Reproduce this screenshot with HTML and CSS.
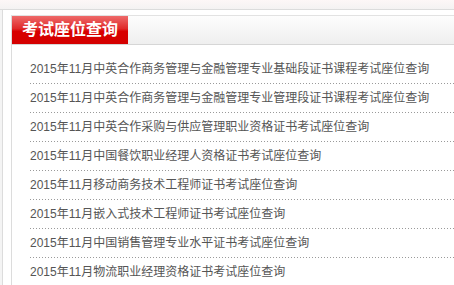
FILE: index.html
```html
<!DOCTYPE html>
<html lang="zh-CN">
<head>
    <meta charset="UTF-8">
    <title>考试座位查询</title>
    <link rel="stylesheet" href="styles.css">
</head>
<body>
    <div class="topbar"></div>
    <div class="wrap">
        <div class="side"></div>
        <div class="main">
            <div class="panel">
                <div class="panel-head">
                    <h2 class="panel-title">考试座位查询</h2>
                </div>
                <ul class="list">
                    <li><a href="#">2015年11月中英合作商务管理与金融管理专业基础段证书课程考试座位查询</a></li>
                    <li><a href="#">2015年11月中英合作商务管理与金融管理专业管理段证书课程考试座位查询</a></li>
                    <li><a href="#">2015年11月中英合作采购与供应管理职业资格证书考试座位查询</a></li>
                    <li><a href="#">2015年11月中国餐饮职业经理人资格证书考试座位查询</a></li>
                    <li><a href="#">2015年11月移动商务技术工程师证书考试座位查询</a></li>
                    <li><a href="#">2015年11月嵌入式技术工程师证书考试座位查询</a></li>
                    <li><a href="#">2015年11月中国销售管理专业水平证书考试座位查询</a></li>
                    <li><a href="#">2015年11月物流职业经理资格证书考试座位查询</a></li>
                </ul>
            </div>
        </div>
    </div>
</body>
</html>
```

FILE: styles.css
```css
body {
    margin: 0;
    font-family: "Liberation Sans", "Noto Sans CJK SC", sans-serif;
    font-size: 12px;
    color: #555;
    background: #fff;
    overflow: hidden;
}

.topbar {
    height: 9px;
    background: linear-gradient(#fdf7f7, #f4f2f2);
    border-bottom: 1px solid #dcdcdc;
}

.wrap {
    display: flex;
}

.side {
    width: 2px;
    min-height: 280px;
    background: #f4f4f4;
    border-right: 1px solid #dcdcdc;
}

.main {
    flex: 1;
    padding: 5px 0 0 8px;
}

.panel {
    border-left: 1px solid #dcdcdc;
    border-top: 1px solid #e2e2e2;
}

.panel-head {
    height: 28px;
    background: linear-gradient(#fdfdfd, #efefef);
    border-bottom: 1px solid #d6d6d6;
}

.panel-title {
    margin: 0;
    width: 116px;
    height: 28px;
    line-height: 28px;
    text-align: center;
    font-size: 16px;
    font-weight: bold;
    color: #fff;
    background: linear-gradient(#ee6a6a 0%, #e02a2a 45%, #d80000 55%, #d40000 100%);
}

.list {
    list-style: none;
    margin: 0;
    padding: 10px 0 0 18px;
}

.list li {
    height: 28px;
    line-height: 28px;
    padding-bottom: 1px;
    background: linear-gradient(to right, #9a9a9a 1px, transparent 1px) repeat-x left bottom;
    background-size: 3px 1px;
}

.list a {
    color: #555;
    text-decoration: none;
}
```
